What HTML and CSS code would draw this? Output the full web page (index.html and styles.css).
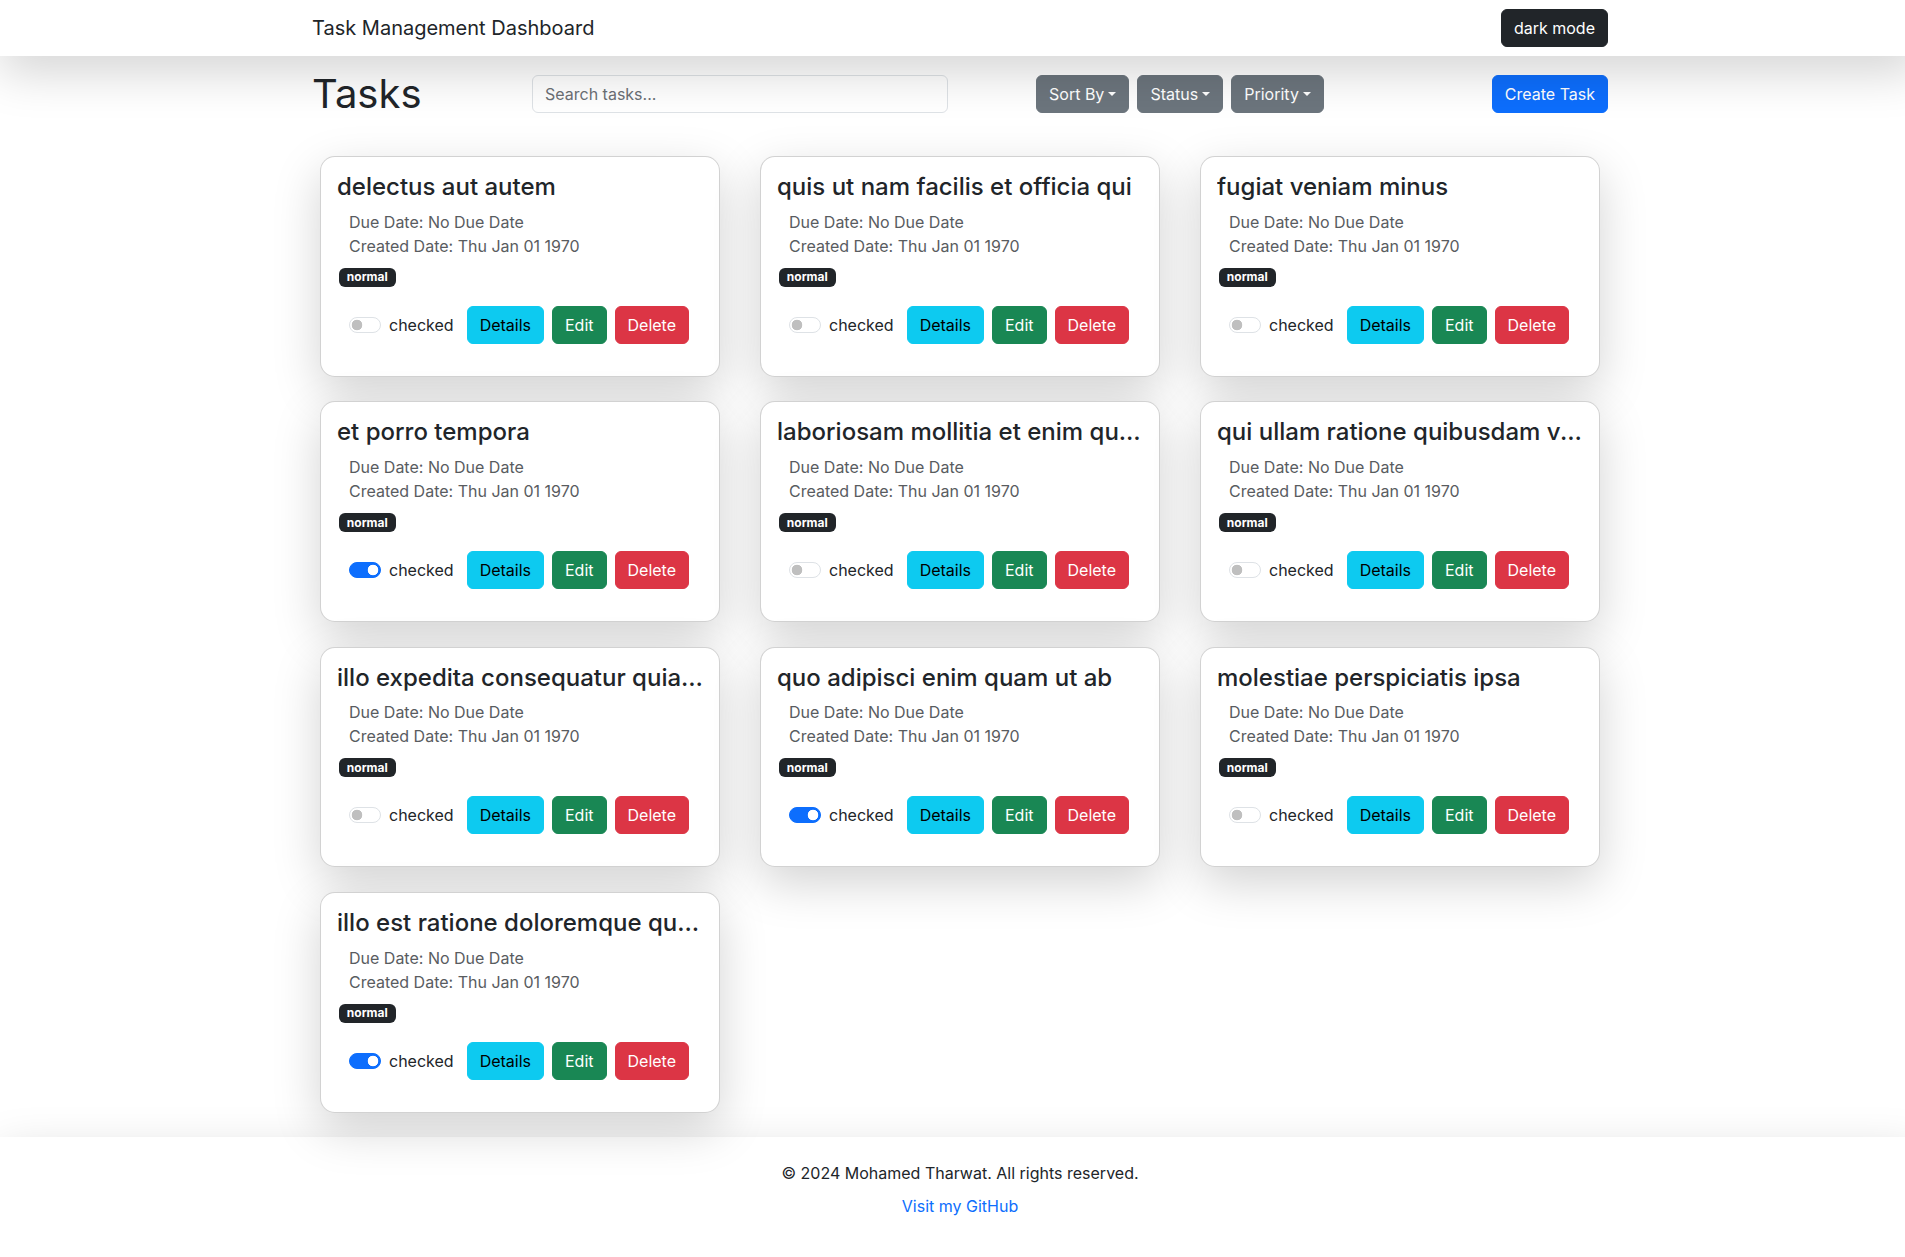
FILE: index.html
```html
<!DOCTYPE html>
<html lang="en">
<head>
<meta charset="utf-8">
<title>Task Management Dashboard</title>
<link rel="stylesheet" href="styles.css">
</head>
<body>
<nav class="navbar">
  <div class="container nav-inner">
    <span class="brand">Task Management Dashboard</span>
    <button class="btn btn-dark">dark mode</button>
  </div>
</nav>

<main class="container">
  <div class="toolbar">
    <div class="col col-2"><h1 class="page-title">Tasks</h1></div>
    <div class="col col-4"><input class="search" type="text" placeholder="Search tasks..."></div>
    <div class="col col-4 filters">
      <button class="btn btn-secondary dropdown-toggle">Sort By</button>
      <button class="btn btn-secondary dropdown-toggle">Status</button>
      <button class="btn btn-secondary dropdown-toggle">Priority</button>
    </div>
    <div class="col col-2 create-col"><button class="btn btn-primary">Create Task</button></div>
  </div>

  <div class="task-grid">
    <div class="card">
      <h4 class="card-title">delectus aut autem</h4>
      <div class="card-dates"><div>Due Date: No Due Date</div><div>Created Date: Thu Jan 01 1970</div></div>
      <div class="badge-row"><span class="badge">normal</span></div>
      <div class="controls"><span class="switch"></span><span class="switch-label">checked</span><div class="actions"><button class="btn btn-info">Details</button><button class="btn btn-success">Edit</button><button class="btn btn-danger">Delete</button></div></div>
    </div>
    <div class="card">
      <h4 class="card-title">quis ut nam facilis et officia qui</h4>
      <div class="card-dates"><div>Due Date: No Due Date</div><div>Created Date: Thu Jan 01 1970</div></div>
      <div class="badge-row"><span class="badge">normal</span></div>
      <div class="controls"><span class="switch"></span><span class="switch-label">checked</span><div class="actions"><button class="btn btn-info">Details</button><button class="btn btn-success">Edit</button><button class="btn btn-danger">Delete</button></div></div>
    </div>
    <div class="card">
      <h4 class="card-title">fugiat veniam minus</h4>
      <div class="card-dates"><div>Due Date: No Due Date</div><div>Created Date: Thu Jan 01 1970</div></div>
      <div class="badge-row"><span class="badge">normal</span></div>
      <div class="controls"><span class="switch"></span><span class="switch-label">checked</span><div class="actions"><button class="btn btn-info">Details</button><button class="btn btn-success">Edit</button><button class="btn btn-danger">Delete</button></div></div>
    </div>
    <div class="card">
      <h4 class="card-title">et porro tempora</h4>
      <div class="card-dates"><div>Due Date: No Due Date</div><div>Created Date: Thu Jan 01 1970</div></div>
      <div class="badge-row"><span class="badge">normal</span></div>
      <div class="controls"><span class="switch on"></span><span class="switch-label">checked</span><div class="actions"><button class="btn btn-info">Details</button><button class="btn btn-success">Edit</button><button class="btn btn-danger">Delete</button></div></div>
    </div>
    <div class="card">
      <h4 class="card-title">laboriosam mollitia et enim quasi adipisci quia provident illum</h4>
      <div class="card-dates"><div>Due Date: No Due Date</div><div>Created Date: Thu Jan 01 1970</div></div>
      <div class="badge-row"><span class="badge">normal</span></div>
      <div class="controls"><span class="switch"></span><span class="switch-label">checked</span><div class="actions"><button class="btn btn-info">Details</button><button class="btn btn-success">Edit</button><button class="btn btn-danger">Delete</button></div></div>
    </div>
    <div class="card">
      <h4 class="card-title">qui ullam ratione quibusdam voluptatem quia omnis</h4>
      <div class="card-dates"><div>Due Date: No Due Date</div><div>Created Date: Thu Jan 01 1970</div></div>
      <div class="badge-row"><span class="badge">normal</span></div>
      <div class="controls"><span class="switch"></span><span class="switch-label">checked</span><div class="actions"><button class="btn btn-info">Details</button><button class="btn btn-success">Edit</button><button class="btn btn-danger">Delete</button></div></div>
    </div>
    <div class="card">
      <h4 class="card-title">illo expedita consequatur quia in</h4>
      <div class="card-dates"><div>Due Date: No Due Date</div><div>Created Date: Thu Jan 01 1970</div></div>
      <div class="badge-row"><span class="badge">normal</span></div>
      <div class="controls"><span class="switch"></span><span class="switch-label">checked</span><div class="actions"><button class="btn btn-info">Details</button><button class="btn btn-success">Edit</button><button class="btn btn-danger">Delete</button></div></div>
    </div>
    <div class="card">
      <h4 class="card-title">quo adipisci enim quam ut ab</h4>
      <div class="card-dates"><div>Due Date: No Due Date</div><div>Created Date: Thu Jan 01 1970</div></div>
      <div class="badge-row"><span class="badge">normal</span></div>
      <div class="controls"><span class="switch on"></span><span class="switch-label">checked</span><div class="actions"><button class="btn btn-info">Details</button><button class="btn btn-success">Edit</button><button class="btn btn-danger">Delete</button></div></div>
    </div>
    <div class="card">
      <h4 class="card-title">molestiae perspiciatis ipsa</h4>
      <div class="card-dates"><div>Due Date: No Due Date</div><div>Created Date: Thu Jan 01 1970</div></div>
      <div class="badge-row"><span class="badge">normal</span></div>
      <div class="controls"><span class="switch"></span><span class="switch-label">checked</span><div class="actions"><button class="btn btn-info">Details</button><button class="btn btn-success">Edit</button><button class="btn btn-danger">Delete</button></div></div>
    </div>
    <div class="card">
      <h4 class="card-title">illo est ratione doloremque quia maiores aut</h4>
      <div class="card-dates"><div>Due Date: No Due Date</div><div>Created Date: Thu Jan 01 1970</div></div>
      <div class="badge-row"><span class="badge">normal</span></div>
      <div class="controls"><span class="switch on"></span><span class="switch-label">checked</span><div class="actions"><button class="btn btn-info">Details</button><button class="btn btn-success">Edit</button><button class="btn btn-danger">Delete</button></div></div>
    </div>
  </div>
</main>

<footer class="footer">
  <p>© 2024 Mohamed Tharwat. All rights reserved.</p>
  <a href="#">Visit my GitHub</a>
</footer>
</body>
</html>
```

FILE: styles.css
```css
*, *::before, *::after { box-sizing: border-box; }

html { overflow: hidden; }

body {
  margin: 0;
  width: 1920px;
  font-family: Inter, "Noto Sans", sans-serif;
  font-size: 16px;
  line-height: 1.5;
  color: #212529;
  background: #fff;
}

.container {
  width: 1320px;
  padding: 0 12px;
  margin: 0 auto;
}

/* navbar */
.navbar {
  position: relative;
  z-index: 2;
  background: #fff;
  padding: 8px 0;
  box-shadow: 0 1rem 3rem rgba(0, 0, 0, 0.175);
}
.nav-inner {
  display: flex;
  align-items: center;
  justify-content: space-between;
}
.brand {
  font-size: 20px;
  line-height: 30px;
  padding: 5px 0;
  color: #212529;
}

/* buttons */
.btn {
  display: inline-block;
  font-family: inherit;
  font-size: 16px;
  font-weight: 400;
  line-height: 24px;
  padding: 6px 12px;
  border: 1px solid transparent;
  border-radius: 6px;
  white-space: nowrap;
  cursor: pointer;
}
.btn-dark { background: #212529; border-color: #212529; color: #fff; }
.btn-primary { background: #0d6efd; border-color: #0d6efd; color: #fff; }
.btn-secondary { background: #6c757d; border-color: #6c757d; color: #fff; }
.btn-info { background: #0dcaf0; border-color: #0dcaf0; color: #000; }
.btn-success { background: #198754; border-color: #198754; color: #fff; }
.btn-danger { background: #dc3545; border-color: #dc3545; color: #fff; }

.dropdown-toggle::after {
  content: "";
  display: inline-block;
  margin-left: 0.255em;
  vertical-align: 0.255em;
  border-top: 0.3em solid;
  border-right: 0.3em solid transparent;
  border-left: 0.3em solid transparent;
  border-bottom: 0;
}

/* toolbar */
.toolbar {
  display: flex;
  align-items: center;
  height: 48px;
  margin: 14px -12px 0;
}
.col { padding: 0 12px; }
.col-2 { flex: 0 0 220px; }
.col-4 { flex: 0 0 440px; }
.page-title {
  margin: 0;
  font-size: 40px;
  line-height: 48px;
  font-weight: 400;
}
.search {
  display: block;
  width: 100%;
  height: 38px;
  padding: 6px 12px;
  font-family: inherit;
  font-size: 16px;
  line-height: 24px;
  color: #212529;
  border: 1px solid #dee2e6;
  border-radius: 6px;
  background: #fff;
}
.search::placeholder { color: #6c7075; }
.filters {
  display: flex;
  justify-content: center;
  gap: 8px;
}
.create-col {
  display: flex;
  justify-content: flex-end;
}

/* cards */
.task-grid {
  display: grid;
  grid-template-columns: repeat(3, minmax(0, 1fr));
  column-gap: 24px;
  row-gap: 24.5px;
  margin-top: 38px;
  padding-bottom: 24px;
}
.card {
  margin: 0 8px;
  padding: 16px;
  background: #fff;
  border: 1px solid rgba(0, 0, 0, 0.175);
  border-radius: 15px;
  box-shadow: 0 1rem 3rem rgba(0, 0, 0, 0.175);
}
.card-title {
  margin: 0 0 8px;
  font-size: 24px;
  line-height: 1.2;
  font-weight: 500;
  white-space: nowrap;
  overflow: hidden;
  text-overflow: ellipsis;
}
.card-dates {
  padding-left: 12px;
  margin-bottom: 10px;
  color: #595c5f;
}
.badge-row { display: flex; }
.badge {
  margin-left: 2px;
  font-size: 12px;
  font-weight: 700;
  line-height: 1;
  padding: 3.5px 7.8px;
  background: #212529;
  color: #fff;
  border-radius: 6px;
}
.controls {
  display: flex;
  align-items: center;
  padding-left: 12px;
  margin: 19px 0 16px;
}
.switch {
  flex: 0 0 32px;
  width: 32px;
  height: 16px;
  border: 1px solid #dee2e6;
  border-radius: 8px;
  background: radial-gradient(circle at 7px 50%, rgba(0, 0, 0, 0.25) 5px, transparent 5.6px), #fff;
}
.switch.on {
  border-color: #0d6efd;
  background: radial-gradient(circle at calc(100% - 7px) 50%, #fff 5px, transparent 5.6px), #0d6efd;
}
.switch-label { margin-left: 8px; }
.actions {
  display: flex;
  gap: 8px;
  margin-left: 13px;
}

/* footer */
.footer {
  background: #fff;
  text-align: center;
  padding: 24px 0 60px;
  box-shadow: 0 1rem 3rem rgba(0, 0, 0, 0.175);
}
.footer p { margin: 0 0 9px; }
.footer a { color: #0d6efd; text-decoration: none; }
```
